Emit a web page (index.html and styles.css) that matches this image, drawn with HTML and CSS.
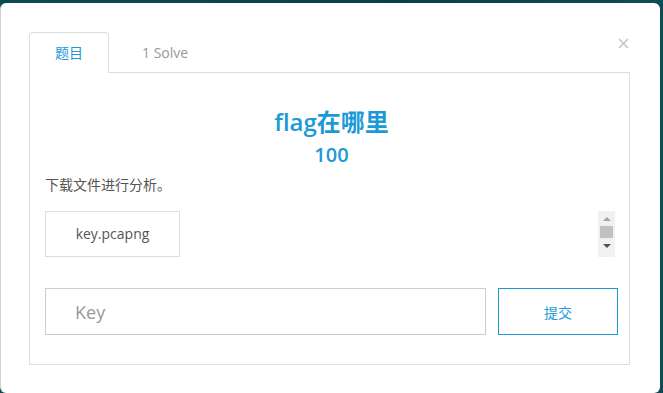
FILE: index.html
```html
<!DOCTYPE html>
<html>
<head>
    <meta charset="utf-8">
    <meta name="viewport" content="initial-scale=1, width=device-width">
    <link rel="stylesheet" href="styles.css">
</head>
<body>
    <div class="challenge-modal">
        <button type="button" class="close-button" aria-label="Close">
            <svg width="11" height="11" viewBox="0 0 11 11">
                <path d="M1 1L10 10M10 1L1 10" stroke="#c4c4c4" stroke-width="1.5" fill="none"/>
            </svg>
        </button>
        <div class="tab-list">
            <div class="tab tab-active">题目</div>
            <div class="tab">1 Solve</div>
        </div>
        <div class="tab-panel">
            <h1 class="challenge-name">flag在哪里</h1>
            <div class="challenge-value">100</div>
            <p class="challenge-desc">下载文件进行分析。</p>
            <div class="file-row">
                <a class="file-button" href="#">key.pcapng</a>
                <div class="fake-scrollbar">
                    <span class="arrow-up"></span>
                    <span class="thumb"></span>
                    <span class="arrow-down"></span>
                </div>
            </div>
            <form class="submit-row" onsubmit="return false">
                <input type="text" class="key-input" placeholder="Key">
                <button type="submit" class="submit-button">提交</button>
            </form>
        </div>
    </div>
</body>
</html>
```

FILE: styles.css
```css
body {
    margin: 0;
    height: 393px;
    overflow: hidden;
    font-family: 'Open Sans', 'Noto Sans CJK SC', sans-serif;
    background: linear-gradient(90deg, #0c4b56, #0a3f49 60%, #0d4c57);
}
.challenge-modal {
    position: relative;
    width: 660px;
    height: 390px;
    margin-top: 3px;
    padding: 29px 30px 0 28px;
    background-color: #fff;
    border-left: 1px solid #d0d0d0;
    border-radius: 6px;
    box-sizing: border-box;
}
.close-button {
    position: absolute;
    top: 35px;
    right: 31px;
    padding: 0;
    border: none;
    background: none;
    line-height: 0;
    cursor: pointer;
}
.tab-list {
    display: flex;
    height: 40px;
}
.tab {
    box-sizing: border-box;
    height: 41px;
    padding: 0 25px;
    line-height: 40px;
    font-size: 14px;
    color: #999;
    border: 1px solid transparent;
    border-bottom: none;
}
.tab + .tab {
    padding-left: 32px;
}
.tab-active {
    color: #1d9ad6;
    background-color: #fff;
    border-color: #ddd;
    border-radius: 4px 4px 0 0;
    position: relative;
    z-index: 1;
}
.tab-panel {
    width: 601px;
    box-sizing: border-box;
    padding: 34px 11px 29px 15px;
    border: 1px solid #ddd;
    display: flex;
    flex-direction: column;
}
.challenge-name {
    margin: 0;
    text-align: center;
    font-size: 24px;
    line-height: 30px;
    font-weight: 600;
    color: #1d9ad6;
}
.challenge-value {
    margin-top: 5px;
    text-align: center;
    font-size: 20px;
    line-height: 26px;
    font-weight: 600;
    color: #1d9ad6;
}
.challenge-desc {
    margin: 7px 0 0;
    font-size: 14px;
    line-height: 20px;
    color: #555;
}
.file-row {
    margin-top: 16px;
    display: flex;
    justify-content: space-between;
    padding-right: 3px;
}
.file-button {
    box-sizing: border-box;
    width: 135px;
    height: 46px;
    border: 1px solid #ddd;
    line-height: 44px;
    text-align: center;
    font-size: 14px;
    color: #555;
    text-decoration: none;
}
.fake-scrollbar {
    width: 17px;
    height: 46px;
    background-color: #f1f1f1;
    display: flex;
    flex-direction: column;
    align-items: center;
}
.arrow-up {
    margin-top: 6px;
    border: 4px solid transparent;
    border-top: none;
    border-bottom: 4px solid #a3a3a3;
}
.thumb {
    margin-top: 5px;
    width: 13px;
    height: 12px;
    background-color: #c1c1c1;
}
.arrow-down {
    margin-top: 6px;
    border: 4px solid transparent;
    border-bottom: none;
    border-top: 4px solid #505050;
}
.submit-row {
    margin: 31px 0 0;
    display: flex;
    gap: 12px;
}
.key-input {
    box-sizing: border-box;
    width: 441px;
    height: 47px;
    padding: 0 29px;
    border: 1px solid #ccc;
    font-family: 'Open Sans', 'Noto Sans CJK SC', sans-serif;
    font-size: 18px;
    color: #555;
    outline: none;
}
.key-input::placeholder {
    color: #999;
}
.submit-button {
    box-sizing: border-box;
    width: 120px;
    height: 47px;
    border: 1px solid #1d9ad6;
    background-color: #fff;
    color: #1d9ad6;
    font-family: 'Open Sans', 'Noto Sans CJK SC', sans-serif;
    font-size: 14px;
    cursor: pointer;
}
```
